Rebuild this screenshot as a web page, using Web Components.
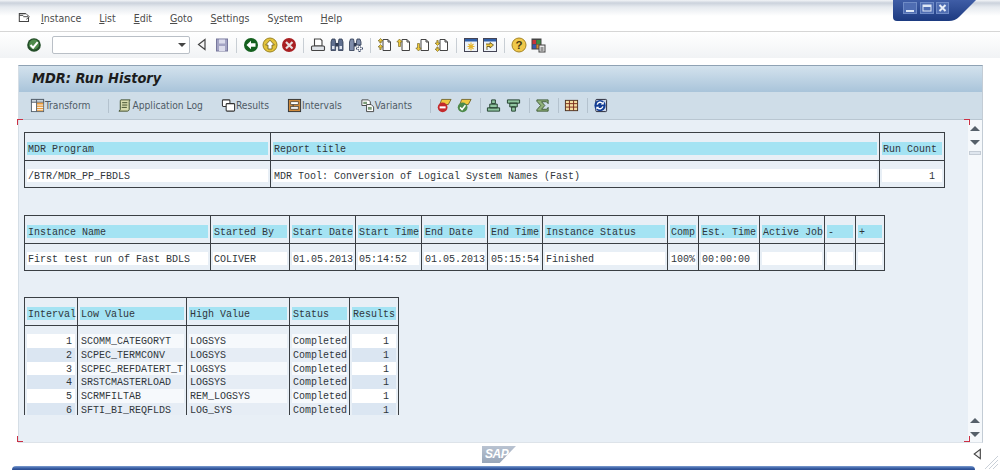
<!DOCTYPE html>
<html>
<head>
<meta charset="utf-8">
<title>MDR: Run History</title>
<style>
  html, body { margin: 0; height: 100%; background: #fff; overflow: hidden; }
  body { display: flex; flex-direction: column; height: 470px; font-family: "DejaVu Sans Condensed", "Liberation Sans", sans-serif; }
</style>
</head>
<body>
<sap-menubar>
  <sap-menu key="I">nstance</sap-menu>
  <sap-menu key="L">ist</sap-menu>
  <sap-menu key="E">dit</sap-menu>
  <sap-menu key="G">oto</sap-menu>
  <sap-menu key="S">ettings</sap-menu>
  <sap-menu pre="S" key="y">stem</sap-menu>
  <sap-menu key="H">elp</sap-menu>
</sap-menubar>

<sap-systembar></sap-systembar>

<sap-panel heading="MDR: Run History">
  <sap-apptool slot="tools" icon="transform">Transform</sap-apptool>
  <sap-sep slot="tools" wide style="margin-right:8px"></sap-sep>
  <sap-apptool slot="tools" icon="log">Application Log</sap-apptool>
  <sap-apptool slot="tools" icon="results">Results</sap-apptool>
  <sap-apptool slot="tools" icon="intervals">Intervals</sap-apptool>
  <sap-apptool slot="tools" icon="variants">Variants</sap-apptool>
  <sap-sep slot="tools" wide></sap-sep>
  <sap-apptool slot="tools" icon="filterno"></sap-apptool>
  <sap-apptool slot="tools" icon="filterok"></sap-apptool>
  <sap-sep slot="tools"></sap-sep>
  <sap-apptool slot="tools" icon="sortup"></sap-apptool>
  <sap-apptool slot="tools" icon="sortdown"></sap-apptool>
  <sap-sep slot="tools"></sap-sep>
  <sap-apptool slot="tools" icon="sigma"></sap-apptool>
  <sap-sep slot="tools"></sap-sep>
  <sap-apptool slot="tools" icon="grid"></sap-apptool>
  <sap-sep slot="tools"></sap-sep>
  <sap-apptool slot="tools" icon="refresh"></sap-apptool>

  <mdr-table cols="246 609 65">
    <mdr-cell head>MDR Program</mdr-cell><mdr-cell head>Report title</mdr-cell><mdr-cell head>Run Count</mdr-cell>
    <mdr-cell>/BTR/MDR_PP_FBDLS</mdr-cell><mdr-cell>MDR Tool: Conversion of Logical System Names (Fast)</mdr-cell><mdr-cell num="wide">1</mdr-cell>
  </mdr-table>

  <mdr-table style="margin-top:1px" cols="186 79 66 66 66 55 125 31 61 65 31 29">
    <mdr-cell head>Instance Name</mdr-cell><mdr-cell head>Started By</mdr-cell><mdr-cell head>Start Date</mdr-cell><mdr-cell head>Start Time</mdr-cell><mdr-cell head>End Date</mdr-cell><mdr-cell head>End Time</mdr-cell><mdr-cell head>Instance Status</mdr-cell><mdr-cell head>Comp</mdr-cell><mdr-cell head>Est. Time</mdr-cell><mdr-cell head>Active Job</mdr-cell><mdr-cell head>-</mdr-cell><mdr-cell head>+</mdr-cell>
    <mdr-cell>First test run of Fast BDLS</mdr-cell><mdr-cell>COLIVER</mdr-cell><mdr-cell>01.05.2013</mdr-cell><mdr-cell>05:14:52</mdr-cell><mdr-cell>01.05.2013</mdr-cell><mdr-cell>05:15:54</mdr-cell><mdr-cell>Finished</mdr-cell><mdr-cell>100%</mdr-cell><mdr-cell>00:00:00</mdr-cell><mdr-cell></mdr-cell><mdr-cell></mdr-cell><mdr-cell></mdr-cell>
  </mdr-table>

  <mdr-table cols="53 109 103 60 49" clipped>
    <mdr-cell head>Interval</mdr-cell><mdr-cell head>Low Value</mdr-cell><mdr-cell head>High Value</mdr-cell><mdr-cell head>Status</mdr-cell><mdr-cell head>Results</mdr-cell>
    <mdr-cell row="1" num>1</mdr-cell><mdr-cell row="1" plain>SCOMM_CATEGORYT</mdr-cell><mdr-cell row="1" plain>LOGSYS</mdr-cell><mdr-cell row="1" plain>Completed</mdr-cell><mdr-cell row="1" num="wide">1</mdr-cell>
    <mdr-cell row="2" num>2</mdr-cell><mdr-cell row="2" plain>SCPEC_TERMCONV</mdr-cell><mdr-cell row="2" plain>LOGSYS</mdr-cell><mdr-cell row="2" plain>Completed</mdr-cell><mdr-cell row="2" num="wide">1</mdr-cell>
    <mdr-cell row="3" num>3</mdr-cell><mdr-cell row="3" plain>SCPEC_REFDATERT_T</mdr-cell><mdr-cell row="3" plain>LOGSYS</mdr-cell><mdr-cell row="3" plain>Completed</mdr-cell><mdr-cell row="3" num="wide">1</mdr-cell>
    <mdr-cell row="4" num>4</mdr-cell><mdr-cell row="4" plain>SRSTCMASTERLOAD</mdr-cell><mdr-cell row="4" plain>LOGSYS</mdr-cell><mdr-cell row="4" plain>Completed</mdr-cell><mdr-cell row="4" num="wide">1</mdr-cell>
    <mdr-cell row="5" num>5</mdr-cell><mdr-cell row="5" plain>SCRMFILTAB</mdr-cell><mdr-cell row="5" plain>REM_LOGSYS</mdr-cell><mdr-cell row="5" plain>Completed</mdr-cell><mdr-cell row="5" num="wide">1</mdr-cell>
    <mdr-cell row="6" num>6</mdr-cell><mdr-cell row="6" plain>SFTI_BI_REQFLDS</mdr-cell><mdr-cell row="6" plain>LOG_SYS</mdr-cell><mdr-cell row="6" plain>Completed</mdr-cell><mdr-cell row="6" num="wide">1</mdr-cell>
  </mdr-table>
</sap-panel>

<sap-footer></sap-footer>

<script>
// all the little sap icons, 16x16 viewbox
const ARROW_PAGE = '<path d="M6 2.500h5l2.500 2.500v8.500H6z" fill="#fff" stroke="#444"/><path d="M11 2.500V5h2.500" fill="none" stroke="#444"/>';
const ICONS = {
  menu: '<path d="M9 3H1.500v9H12V8" fill="none" stroke="#444" stroke-width="1.200"/><path d="M1.500 5H6M6 6.500h5.500M9.500 3.500l3.500 3-3.500 3" fill="none" stroke="#444" stroke-width="1.100"/>',
  check: '<circle cx="8" cy="8" r="6.800" fill="#234d28"/><circle cx="8" cy="7.500" r="5" fill="#4d8a4a"/><path d="M4.500 8l2.600 2.700 4.600-5.600" fill="none" stroke="#fff" stroke-width="2"/>',
  backtri: '<path d="M11 2.500v10L4.500 7.500z" fill="#f4f4f4" stroke="#444" stroke-width="1.200"/>',
  save: '<rect x="2.500" y="2" width="11" height="12" fill="#a4a4c4" stroke="#77779c"/><rect x="5" y="2.500" width="6" height="4" fill="#dcdcec"/><rect x="5" y="9" width="6" height="5" fill="#dcdcec"/>',
  back: '<circle cx="8" cy="8" r="7" fill="#14601e"/><path d="M3.500 8L8 3.800V6.200h4.500v3.600H8v2.400z" fill="#fff"/>',
  up: '<circle cx="8" cy="8" r="7" fill="#e3c23b" stroke="#9b8422"/><path d="M8 3.200L12.400 8H10v4H6V8H3.600z" fill="#fff" stroke="#6b5a18" stroke-width=".8"/>',
  cancel: '<circle cx="8" cy="8" r="7" fill="#a81f22"/><path d="M5 5l6.500 6.500M11.500 5L5 11.500" stroke="#e8e0e0" stroke-width="2.200"/>',
  print: '<path d="M4.500 2h6l1.500 1.500V9h-7.500z" fill="#fff" stroke="#444" stroke-width="1.100"/><rect x="1.500" y="9" width="13" height="4.500" rx="1" fill="#dfe3e8" stroke="#444" stroke-width="1.100"/>',
  find: '<path d="M2 5l1-3h3l.6 3v8.500H2zM9.400 5l.6-3h3l1 3v8.500H9.400z" fill="#5f6f8f" stroke="#2f3a52" stroke-width=".8"/><rect x="6.500" y="6" width="3" height="3.500" fill="#2f3a52"/><rect x="3" y="9" width="2.500" height="3" fill="#dfe4ee"/><rect x="10.500" y="9" width="2.500" height="3" fill="#dfe4ee"/>',
  findnext: '<path d="M1.500 5l1-3h3l.6 3v8.500H1.500zM8.400 5l.6-3h3l1 3v3H8.400z" fill="#7f8dab" stroke="#2f3a52" stroke-width=".8"/><rect x="6" y="6" width="2.500" height="3.500" fill="#2f3a52"/><path d="M11.500 8v7M8 11.500h7" stroke="#3e4b68" stroke-width="2"/><path d="M11.500 9v5M9 11.500h5" stroke="#fff" stroke-width=".9"/>',
  first: ARROW_PAGE + '<path d="M3.500 1.500L1 4h1.800v2h1.400V4H6zM3.500 7.500L1 10h1.800v2.500h1.400V10H6z" fill="#efc93a" stroke="#6a5a18" stroke-width=".6"/>',
  prev: ARROW_PAGE + '<path d="M3.500 2L.8 5h1.700v4.500h2V5h1.700z" fill="#efc93a" stroke="#6a5a18" stroke-width=".6"/>',
  next: ARROW_PAGE + '<path d="M3.500 14L.8 11h1.700V6.500h2V11h1.700z" fill="#efc93a" stroke="#6a5a18" stroke-width=".6"/>',
  last: ARROW_PAGE + '<path d="M3.500 14.500L1 12h1.800v-2h1.400v2H6zM3.500 8.500L1 6h1.800V3.500h1.400V6H6z" fill="#efc93a" stroke="#6a5a18" stroke-width=".6"/>',
  session: '<rect x="1.500" y="1.500" width="13" height="13" fill="#eef3f8" stroke="#445"/><rect x="2" y="2" width="12" height="2.500" fill="#2f5fa8"/><path d="M8 5.500v8M4.500 9.500h7M5.500 7l5 5M10.500 7l-5 5" stroke="#e5b52c" stroke-width="1.100"/>',
  shortcut: '<rect x="1.500" y="1.500" width="13" height="13" fill="#eef3f8" stroke="#445"/><rect x="2" y="2" width="12" height="2.500" fill="#2f5fa8"/><path d="M5 13V9.500h3V11l3.500-3L8 5.500V7H4" fill="#f0c93f" stroke="#5a4c15" stroke-width=".8"/>',
  help: '<circle cx="8" cy="8" r="7" fill="#f0c84a" stroke="#a58423"/><text x="8" y="12.300" text-anchor="middle" font-family="Liberation Sans" font-weight="700" font-size="11.500" fill="#4a3a12">?</text>',
  custom: '<rect x="1.500" y="1.500" width="10" height="11" fill="#444"/><rect x="2.500" y="3" width="3.500" height="4" fill="#c8323a"/><rect x="6.500" y="3" width="4" height="4" fill="#3c8c44"/><rect x="2.500" y="7.500" width="3.500" height="4" fill="#3858b0"/><rect x="6.500" y="7.500" width="4" height="4" fill="#d08a30"/><rect x="9" y="8" width="6" height="7" fill="#e8e8e8" stroke="#444"/><path d="M10.500 11h3M10.500 13h3" stroke="#444"/>',
  transform: '<rect x="1.500" y="1.500" width="13" height="13" fill="#fff" stroke="#55606c"/><rect x="1.500" y="1.500" width="13" height="3" fill="#c9d4de" stroke="#55606c"/><rect x="7" y="5" width="7" height="9" fill="#e89a3a"/><path d="M7 7.500h7M7 10h7M7 12.500h7" stroke="#fff"/><path d="M7 1.500v13" stroke="#55606c"/>',
  log: '<path d="M4 2h10c-1 1-1 2-1 3v7c0 1-1 2-2 2H2c1-.5 1.500-1 1.500-2V4C3.500 3 3.500 2.500 4 2z" fill="#d8dcae" stroke="#3c4a28"/><path d="M5.500 5h5.500M5.500 7.500h5.500M5 10h5.500" stroke="#3c4a28"/>',
  results: '<rect x="1.500" y="2" width="8" height="7" rx="1" fill="#fff" stroke="#333" stroke-width="1.100"/><rect x="5.500" y="6" width="9" height="8" rx="1" fill="#fff" stroke="#333" stroke-width="1.100"/>',
  intervals: '<rect x="1.500" y="1.500" width="13" height="13" fill="#cf8a3c" stroke="#333"/><rect x="4" y="4" width="8" height="3" fill="#fff" stroke="#333" stroke-width=".7"/><rect x="4" y="9" width="8" height="3" fill="#eee" stroke="#333" stroke-width=".7"/><path d="M6.500 7v2" stroke="#333"/>',
  variants: '<path d="M2 2h7l2 2v4H2z" fill="#fff" stroke="#444"/><path d="M7 7h5l2.500 2.500V14.500H7z" fill="#fff" stroke="#444"/><rect x="3.500" y="4" width="4" height="2.500" fill="#7c9c78"/><rect x="8.500" y="9.500" width="4" height="3" fill="#7c9c78"/>',
  filterno: '<path d="M5 1.500h10L12 7H3z" fill="#efc940" stroke="#5c4f16" stroke-width=".8"/><circle cx="6" cy="10" r="5.200" fill="#c42a2c"/><rect x="2.800" y="8.900" width="6.400" height="2.200" fill="#fff"/>',
  filterok: '<path d="M5 1.500h10L12 7H3z" fill="#efc940" stroke="#5c4f16" stroke-width=".8"/><circle cx="6" cy="10" r="5.200" fill="#4d8a4a"/><path d="M3.300 10l2.100 2.300 3.600-4.500" fill="none" stroke="#fff" stroke-width="1.600"/>',
  sortup: '<path d="M6 2h4v4H6zM4 6.500h8v4H4zM1.500 10.500h13v3.500h-13z" fill="#8fc6a0" stroke="#23402e" stroke-width="1"/>',
  sortdown: '<path d="M1.500 2h13v3.500h-13zM4 5.500h8v4H4zM6 9.500h4v4.500H6z" fill="#8fc6a0" stroke="#23402e" stroke-width="1"/>',
  sigma: '<path d="M2 2h12v4l-1.800-2H7l3.500 4L7 12h5.500L14 10v4H2v-1.500L6 8 2 3.500z" fill="#8fb07a" stroke="#33502a" stroke-width=".9"/>',
  grid: '<rect x="1.500" y="2.500" width="13" height="11" fill="#f3dca0" stroke="#4a3020"/><path d="M1.500 6h13M1.500 9.700h13M5.800 2.500v11M10.200 2.500v11" stroke="#7a2c1c"/>',
  refresh: '<rect x="3" y="1.500" width="11.500" height="13" rx="1" fill="#cdd8ea" stroke="#223"/><circle cx="7.500" cy="8" r="6" fill="#123d94"/><path d="M4.500 7a3.200 3.200 0 0 1 5.700-1.200M10.500 9a3.200 3.200 0 0 1-5.700 1.200" fill="none" stroke="#fff" stroke-width="1.500"/><path d="M11.500 3.500v3.300H8.300zM3.500 12.500V9.200h3.200z" fill="#fff"/>'
};

class SapIcon extends HTMLElement {
  connectedCallback() {
    const size = this.getAttribute('size') || 16;
    this.attachShadow({ mode: 'open' });
    this.shadowRoot.innerHTML = `
      <style>:host { display: block; width: ${size}px; height: ${size}px; flex: none; } svg { display: block; }</style>
      <svg width="${size}" height="${size}" viewBox="0 0 16 16">${ICONS[this.getAttribute('name')] || ''}</svg>`;
  }
}

class SapMenu extends HTMLElement {
  constructor() {
    super();
    this.attachShadow({ mode: 'open' });
    this.shadowRoot.innerHTML = `
      <style>
        :host { display: block; font-size: 10.5px; color: #4c4c4c; white-space: nowrap; }
        u { text-underline-offset: 1px; }
      </style>
      <span id="pre"></span><u id="key"></u><slot></slot>`;
  }
  connectedCallback() {
    this.shadowRoot.getElementById('pre').textContent = this.getAttribute('pre') || '';
    this.shadowRoot.getElementById('key').textContent = this.getAttribute('key') || '';
  }
}

class SapMenubar extends HTMLElement {
  constructor() {
    super();
    this.attachShadow({ mode: 'open' });
    this.shadowRoot.innerHTML = `
      <style>
        :host {
          display: flex; align-items: center; flex: none; position: relative; box-sizing: border-box;
          height: 32px; padding: 5px 0 0 18px; gap: 18px;
          border-bottom: 1px solid #d6d6d6;
          background: linear-gradient(#f2f4f7 0, #cbd2dc 3px, #e6eaef 7px, #fff 16px);
        }
        sap-icon { margin-right: -9px; }
        .window { position: absolute; left: 893px; top: 0; }
      </style>
      <sap-icon name="menu" size="14"></sap-icon>
      <slot></slot>
      <svg class="window" width="90" height="22" viewBox="0 0 90 22">
        <defs><linearGradient id="w" x1="0" y1="0" x2="0" y2="1"><stop offset="0" stop-color="#3f5da6"/><stop offset="1" stop-color="#1c3a80"/></linearGradient></defs>
        <path d="M0 0H83L66 17Q62 21 56 21H4Q0 21 0 17z" fill="url(#w)"/>
        <rect x="10.500" y="2.500" width="13" height="11" fill="#4f6db2" stroke="#6f8bc6"/><rect x="13" y="10" width="8" height="2" fill="#dfe8f6"/>
        <rect x="27.500" y="2.500" width="13" height="11" fill="#4f6db2" stroke="#6f8bc6"/><rect x="30" y="5" width="8" height="6" fill="none" stroke="#dfe8f6"/><rect x="30" y="5" width="8" height="2" fill="#dfe8f6"/>
        <rect x="43.500" y="2.500" width="12" height="11" fill="#4f6db2" stroke="#6f8bc6"/><path d="M46.500 5l6 6M52.500 5l-6 6" stroke="#e6edf8" stroke-width="2"/>
      </svg>`;
  }
}

class SapSep extends HTMLElement {
  constructor() {
    super();
    this.attachShadow({ mode: 'open' });
    this.shadowRoot.innerHTML = `
      <style>
        :host { display: block; width: 1px; height: 15px; flex: none; background: #c8ced4; margin: 0 3px; }
        :host([slot="tools"]) { margin: 0 5px 0 3px; background: #b4c2ce; }
        :host([wide]) { margin: 0 6px 0 0; height: 14px; }
      </style>`;
  }
}

class SapSystembar extends HTMLElement {
  constructor() {
    super();
    this.attachShadow({ mode: 'open' });
    const group = (names) => names.map(n => n === '|' ? '<sap-sep></sap-sep>' : `<sap-icon name="${n}"></sap-icon>`).join('');
    this.shadowRoot.innerHTML = `
      <style>
        :host {
          display: flex; align-items: center; flex: none; box-sizing: border-box;
          height: 26px; padding-left: 26px; gap: 3px; margin-bottom: 7px;
          background: linear-gradient(#fff, #f1f3f5);
        }
        .combo {
          box-sizing: border-box; width: 138px; height: 18px; margin: 0 4px 0 7px; position: relative;
          background: #fff; border: 1px solid #b9bfc6; border-radius: 2px;
        }
        .combo::after {
          content: ""; position: absolute; right: 3px; top: 6px;
          border: 4px solid transparent; border-top: 4px solid #444; border-bottom: 0;
        }
        .tri { margin-left: -3px; margin-right: 1px; }
      </style>
      <sap-icon name="check"></sap-icon>
      <div class="combo"></div>
      <sap-icon class="tri" name="backtri"></sap-icon>
      ${group(['save', '|', 'back', 'up', 'cancel', '|', 'print', 'find', 'findnext', '|', 'first', 'prev', 'next', 'last', '|', 'session', 'shortcut', '|', 'help', 'custom'])}`;
  }
}

class SapApptool extends HTMLElement {
  constructor() {
    super();
    this.attachShadow({ mode: 'open' });
  }
  connectedCallback() {
    this.shadowRoot.innerHTML = `
      <style>
        :host { display: flex; align-items: center; flex: none; font-size: 10.2px; color: #4f5b66; white-space: nowrap; }
        :host(:not(:empty)) { margin-right: 18px; }
        :host(:empty) { margin-right: 5px; }
      </style>
      <sap-icon name="${this.getAttribute('icon')}" size="15"></sap-icon><slot></slot>`;
  }
}

class SapPanel extends HTMLElement {
  constructor() {
    super();
    this.attachShadow({ mode: 'open' });
    this.shadowRoot.innerHTML = `
      <style>
        :host {
          display: flex; flex-direction: column; flex: none; box-sizing: border-box; position: relative;
          width: 965px; height: 378px; margin-left: 18px;
          border: 1px solid #c3ccd5; border-top-color: #8fa2b4; border-bottom-color: #dde3e9; border-left-color: #d5dee6;
          background: #e8eff6;
        }
        .title {
          height: 26px; flex: none; box-sizing: border-box; padding-left: 13px; line-height: 25px;
          background: linear-gradient(#d3e2ed, #a9c4da);
          font-size: 14.5px; font-weight: 700; font-style: italic; color: #1c1c1c;
        }
        .tools {
          height: 28px; flex: none; box-sizing: border-box; padding-left: 11px;
          display: flex; align-items: center;
          background: #cfdde8; border-bottom: 1px solid #b9c6d1;
        }
        .body { flex: 1; display: flex; min-height: 0; }
        .content { flex: 1; display: flex; flex-direction: column; gap: 26px; padding: 12px 0 0 5px; min-width: 0; }
        .scroll {
          width: 14px; flex: none; background: #f5f8fb;
          display: flex; flex-direction: column; align-items: center; padding-top: 6px; box-sizing: border-box;
        }
        .up, .down { width: 0; height: 0; border: 5px solid transparent; }
        .up { border-bottom: 5px solid #56606a; border-top: 0; }
        .down { border-top: 5px solid #56606a; border-bottom: 0; margin-top: 9px; }
        .thumb { width: 12px; height: 4px; background: #dfe6ee; border: 1px solid #c4ccd5; box-sizing: border-box; margin-top: 6px; }
        .spring { flex: 1; }
        .mark { position: absolute; width: 5px; height: 5px; border: 0 solid #cc3044; }
        .tl { left: -2px; top: 53px; border-width: 1px 0 0 1px; }
        .tr { right: 12px; top: 53px; border-width: 1px 1px 0 0; }
        .bl { left: -2px; bottom: 0; border-width: 0 0 1px 1px; }
        .br { right: 12px; bottom: 0; border-width: 0 1px 1px 0; }
      </style>
      <div class="title" id="title"></div>
      <div class="tools"><slot name="tools"></slot></div>
      <div class="body">
        <div class="content"><slot></slot></div>
        <div class="scroll">
          <div class="up"></div><div class="down"></div><div class="thumb"></div>
          <div class="spring"></div>
          <div class="up"></div><div class="down" style="margin-bottom:5px"></div>
        </div>
      </div>
      <i class="mark tl"></i><i class="mark tr"></i><i class="mark bl"></i><i class="mark br"></i>`;
  }
  connectedCallback() {
    this.shadowRoot.getElementById('title').textContent = this.getAttribute('heading');
  }
}

class MdrTable extends HTMLElement {
  constructor() {
    super();
    this.attachShadow({ mode: 'open' });
    this.shadowRoot.innerHTML = `
      <style>
        :host {
          display: grid; justify-content: start; width: max-content;
          border: 1px solid #3a3f44; border-width: 1px 0 1px 1px;
          font-family: "Liberation Mono", monospace; font-size: 10px; color: #30363b;
        }
        :host([clipped]) { height: 117px; overflow: hidden; border-bottom: 0; grid-auto-rows: max-content; }
      </style>
      <slot></slot>`;
  }
  connectedCallback() {
    this.style.gridTemplateColumns = this.getAttribute('cols').split(' ').map(w => w + 'px').join(' ');
  }
}

class MdrCell extends HTMLElement {
  constructor() {
    super();
    this.attachShadow({ mode: 'open' });
    this.shadowRoot.innerHTML = `
      <style>
        :host {
          display: block; box-sizing: border-box; min-width: 0; height: 26px; padding: 8px 2px 0 2px;
          border-right: 1px solid #3a3f44;
        }
        :host([head]) { height: 28px; padding-top: 9px; border-bottom: 1px solid #3a3f44; }
        :host([row]) { height: 13.75px; padding: 0 2px; }
        :host([row="1"]) { height: 21.75px; padding-top: 8px; }
        .strip { height: 13px; line-height: 13px; padding: 1px 1px 0; background: #fff; box-sizing: border-box; white-space: pre; }
        :host([head]) .strip { background: #a4e3f3; }
        :host([row]) .strip { height: 13.75px; background: #fff; }
        :host([row="2"]) .strip, :host([row="4"]) .strip, :host([row="6"]) .strip { background: #dbe6f2; }
        :host([row][plain]) .strip { background: #f6f9fc; }
        :host([row="2"][plain]) .strip, :host([row="4"][plain]) .strip, :host([row="6"][plain]) .strip { background: #e6edf5; }
        :host([num]) .strip { text-align: right; padding-right: 3px; }
        :host([num="wide"]) .strip { padding-right: 7px; }
      </style>
      <div class="strip"><slot></slot></div>`;
  }
}

class SapFooter extends HTMLElement {
  constructor() {
    super();
    this.attachShadow({ mode: 'open' });
    this.shadowRoot.innerHTML = `
      <style>
        :host { display: flex; flex-direction: column; flex: 1; position: relative; }
        .row { flex: 1; display: grid; grid-template-columns: 482px auto 1fr; align-items: center; }
        .logo {
          width: 34px; height: 17px; box-sizing: border-box; padding-left: 3px;
          background: linear-gradient(#b9c3d1, #98a6b9);
          clip-path: polygon(0 0, 100% 0, 52% 100%, 0 100%);
          font: italic 700 12px/17px "Liberation Sans", sans-serif; color: #fff; letter-spacing: -.5px;
        }
        .tri { justify-self: end; margin: 0 15px 0 0; }
        .bar {
          height: 4px; margin: 0 25px 0 12px; border-radius: 6px 6px 0 0;
          background: linear-gradient(#7f9ed0 0, #3d63a8 2px, #28498e 4px);
        }
        .grip { position: absolute; right: 1px; bottom: 0; }
      </style>
      <div class="row">
        <span></span>
        <div class="logo">SAP</div>
        <sap-icon class="tri" name="backtri" size="15"></sap-icon>
      </div>
      <div class="bar"></div>
      <svg class="grip" width="15" height="15" viewBox="0 0 15 15"><path d="M14 1L1 14M14 5L5 14M14 9L9 14" stroke="#c9d0d8"/></svg>`;
  }
}

customElements.define('sap-icon', SapIcon);
customElements.define('sap-menu', SapMenu);
customElements.define('sap-menubar', SapMenubar);
customElements.define('sap-sep', SapSep);
customElements.define('sap-systembar', SapSystembar);
customElements.define('sap-apptool', SapApptool);
customElements.define('sap-panel', SapPanel);
customElements.define('mdr-table', MdrTable);
customElements.define('mdr-cell', MdrCell);
customElements.define('sap-footer', SapFooter);
</script>
</body>
</html>
